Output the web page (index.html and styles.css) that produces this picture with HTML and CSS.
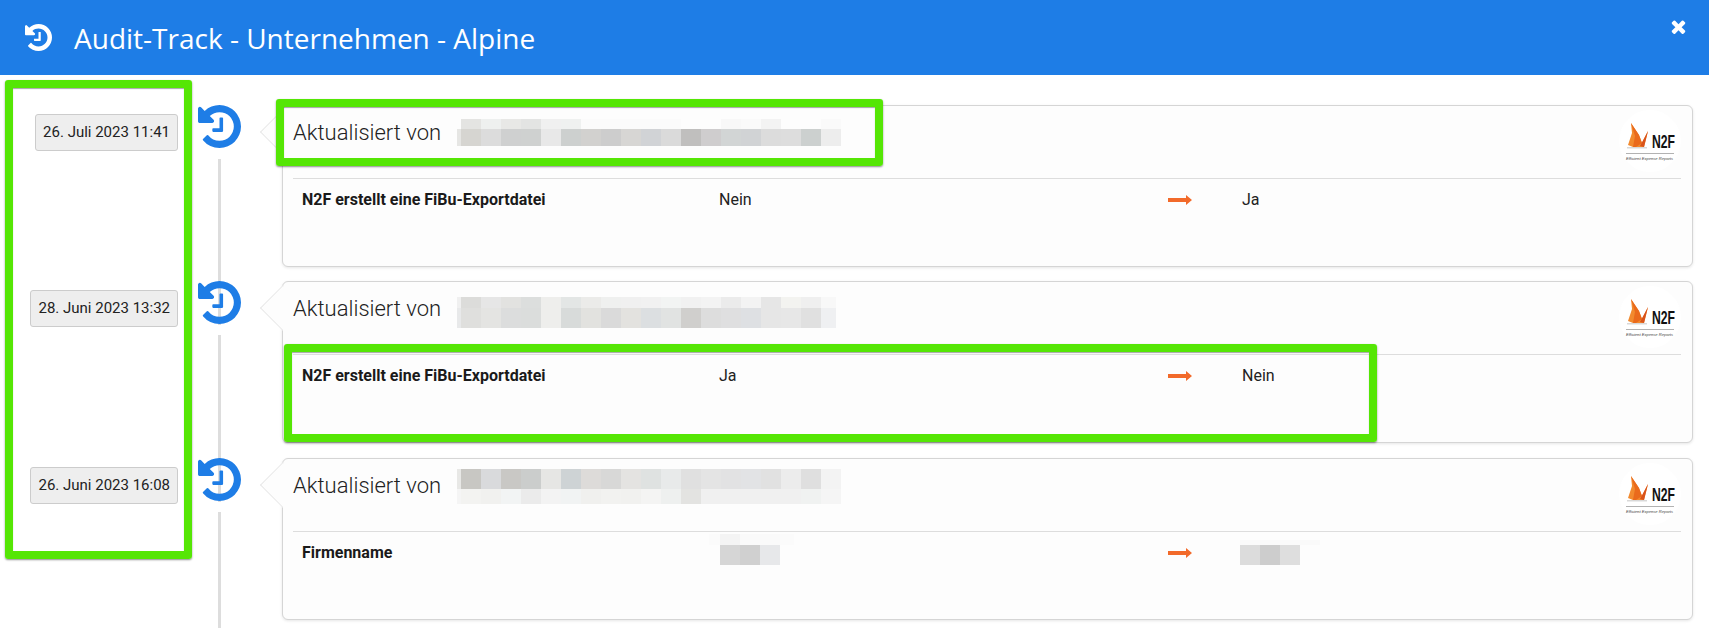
FILE: index.html
```html
<!DOCTYPE html>
<html lang="de">
<head>
<meta charset="utf-8">
<title>Audit-Track - Unternehmen - Alpine</title>
<link rel="stylesheet" href="styles.css">
</head>
<body>
<svg class="sprites" width="0" height="0" aria-hidden="true">
  <defs>
    <symbol id="history" viewBox="128 128 1536 1536"><path d="M1664 896q0 156-61 298t-164 245-245 164-298 61q-172 0-327-72.5t-264-204.5q-7-10-6.5-22.5t8.5-20.5l137-138q10-9 25-9 16 2 23 12 73 95 179 147t225 52q104 0 198.5-40.5t163.5-109.5 109.5-163.5 40.5-198.5-40.5-198.5-109.5-163.5-163.5-109.5-198.5-40.5q-98 0-188 35.5t-160 101.5l137 138q31 30 14 69-17 40-59 40h-448q-26 0-45-19t-19-45v-448q0-42 40-59 39-17 69 14l130 129q107-101 244.5-156.5t284.5-55.5q156 0 298 61t245 164 164 245 61 298zm-640-288v448q0 14-9 23t-23 9h-320q-14 0-23-9t-9-23v-64q0-14 9-23t23-9h224v-352q0-14 9-23t23-9h64q14 0 23 9t9 23z"/></symbol>
    <symbol id="arrow" viewBox="0 0 24 10"><path d="M0 3h18V0l6 5-6 5V7H0z"/></symbol>
    <symbol id="logo" viewBox="0 0 62 62">
      <circle cx="31" cy="31" r="31" fill="#fff"/>
      <path d="M8 37h20v1.500H8z" fill="#d8d8d8"/>
      <path d="M12 13 20 25 23 33 29 21 25 37 14 37 9 35 13 23z" fill="#f28a2e"/>
      <path d="M12 13 20 25 23 33 17 37 14 37 16 26z" fill="#ea6a1c"/>
      <path d="M29 21 25 37 21 36z" fill="#d9531a"/>
      <text x="33" y="38" class="logo-mark" textLength="23" lengthAdjust="spacingAndGlyphs">N2F</text>
      <path d="M7 43h48v.7H7z" fill="#999"/>
      <text x="7" y="50" class="logo-tag" textLength="47" lengthAdjust="spacingAndGlyphs">Efficient Expense Reports</text>
    </symbol>
  </defs>
</svg>

<header class="topbar">
  <svg class="topbar-icon"><use href="#history"/></svg>
  <h1 class="topbar-title">Audit-Track - Unternehmen - Alpine</h1>
  <svg class="topbar-close" viewBox="302 238 1188 1316"><path d="M1490 1322q0 40-28 68l-136 136q-28 28-68 28t-68-28l-294-294-294 294q-28 28-68 28t-68-28l-136-136q-28-28-28-68t28-68l294-294-294-294q-28-28-28-68t28-68l136-136q28-28 68-28t68 28l294 294 294-294q28-28 68-28t68 28l136 136q28 28 28 68t-28 68l-294 294 294 294q28 28 28 68z"/></svg>
</header>

<main class="timeline">
  <article class="entry">
    <div class="entry-date"><time class="date-badge">26. Juli 2023 11:41</time></div>
    <div class="entry-rail"><svg class="rail-icon"><use href="#history"/></svg><span class="rail-line"></span></div>
    <section class="card">
      <div class="card-head">
        <h2 class="card-title">Aktualisiert von</h2>
        <svg class="mosaic mosaic-a" width="384" height="27" viewBox="456 118 384 27" shape-rendering="crispEdges">
          <g>
            <rect x="460" y="118" width="20" height="10" fill="#e4e4e2"/><rect x="480" y="118" width="20" height="10" fill="#eef0ef"/><rect x="500" y="118" width="20" height="10" fill="#e8e8e6"/><rect x="520" y="118" width="20" height="10" fill="#e3e4e3"/><rect x="540" y="118" width="20" height="10" fill="#f0f0f0"/><rect x="560" y="118" width="20" height="10" fill="#eff1f0"/><rect x="580" y="118" width="100" height="10" fill="#fbfbfb"/><rect x="720" y="118" width="20" height="10" fill="#f8f8f8"/><rect x="740" y="118" width="20" height="10" fill="#fafafa"/><rect x="760" y="118" width="20" height="10" fill="#f3f3f3"/><rect x="820" y="118" width="20" height="10" fill="#fafafa"/>
            <rect x="456" y="128" width="4" height="17" fill="#e6e6e4"/><rect x="460" y="128" width="20" height="17" fill="#d6d5d1"/><rect x="480" y="128" width="20" height="17" fill="#dcdcdc"/><rect x="500" y="128" width="20" height="17" fill="#cfd0d0"/><rect x="520" y="128" width="20" height="17" fill="#cfd1d0"/><rect x="540" y="128" width="20" height="17" fill="#e8e8e8"/><rect x="560" y="128" width="20" height="17" fill="#cdd0cf"/><rect x="580" y="128" width="20" height="17" fill="#d2d1cf"/><rect x="600" y="128" width="20" height="17" fill="#cdcdcd"/><rect x="620" y="128" width="20" height="17" fill="#d7d6d4"/><rect x="640" y="128" width="20" height="17" fill="#d1d3d6"/><rect x="660" y="128" width="20" height="17" fill="#dadada"/><rect x="680" y="128" width="20" height="17" fill="#c0bfbe"/><rect x="700" y="128" width="20" height="17" fill="#cfcdce"/><rect x="720" y="128" width="20" height="17" fill="#d2d5d5"/><rect x="740" y="128" width="20" height="17" fill="#d1d3d5"/><rect x="760" y="128" width="20" height="17" fill="#dcdcdc"/><rect x="780" y="128" width="20" height="17" fill="#dddddd"/><rect x="800" y="128" width="20" height="17" fill="#ccd0cf"/><rect x="820" y="128" width="20" height="17" fill="#ededed"/>
          </g>
        </svg>
        <svg class="card-logo"><use href="#logo"/></svg>
      </div>
      <div class="change-row">
        <strong class="change-label">N2F erstellt eine FiBu-Exportdatei</strong>
        <span class="change-value">Nein</span>
        <svg class="change-arrow"><use href="#arrow"/></svg>
        <span class="change-value">Ja</span>
      </div>
    </section>
  </article>

  <article class="entry">
    <div class="entry-date"><time class="date-badge">28. Juni 2023 13:32</time></div>
    <div class="entry-rail"><svg class="rail-icon"><use href="#history"/></svg><span class="rail-line"></span></div>
    <section class="card">
      <div class="card-head">
        <h2 class="card-title">Aktualisiert von</h2>
        <svg class="mosaic mosaic-b" width="379" height="31" viewBox="456 297 379 31" shape-rendering="crispEdges">
          <g>
            <rect x="456" y="297" width="4" height="11" fill="#f0f0f0"/><rect x="460" y="297" width="20" height="11" fill="#dcdcda"/><rect x="480" y="297" width="20" height="11" fill="#e6e6e6"/><rect x="500" y="297" width="20" height="11" fill="#e2e2e0"/><rect x="520" y="297" width="20" height="11" fill="#dcdedd"/><rect x="540" y="297" width="20" height="11" fill="#eeeeec"/><rect x="560" y="297" width="20" height="11" fill="#e3e6e5"/><rect x="580" y="297" width="20" height="11" fill="#ebebe9"/><rect x="600" y="297" width="20" height="11" fill="#eff0ef"/><rect x="620" y="297" width="20" height="11" fill="#f0f0f0"/><rect x="640" y="297" width="20" height="11" fill="#f1f1f1"/><rect x="660" y="297" width="20" height="11" fill="#f2f4f3"/><rect x="680" y="297" width="20" height="11" fill="#f1f1f1"/><rect x="700" y="297" width="20" height="11" fill="#f3f3f3"/><rect x="720" y="297" width="20" height="11" fill="#ebebeb"/><rect x="740" y="297" width="20" height="11" fill="#f3f3f3"/><rect x="760" y="297" width="20" height="11" fill="#e6e6e6"/><rect x="780" y="297" width="20" height="11" fill="#f3f3f0"/><rect x="800" y="297" width="20" height="11" fill="#efefef"/><rect x="820" y="297" width="15" height="11" fill="#f8f8f8"/>
            <rect x="456" y="308" width="4" height="20" fill="#e8e9ea"/><rect x="460" y="308" width="20" height="20" fill="#dfdfdd"/><rect x="480" y="308" width="20" height="20" fill="#e4e4e2"/><rect x="500" y="308" width="20" height="20" fill="#dcdddd"/><rect x="520" y="308" width="20" height="20" fill="#dbdddc"/><rect x="540" y="308" width="20" height="20" fill="#eeeeec"/><rect x="560" y="308" width="20" height="20" fill="#d8dbda"/><rect x="580" y="308" width="20" height="20" fill="#e2e2df"/><rect x="600" y="308" width="20" height="20" fill="#dadada"/><rect x="620" y="308" width="20" height="20" fill="#e3e2df"/><rect x="640" y="308" width="20" height="20" fill="#dcdfe1"/><rect x="660" y="308" width="20" height="20" fill="#e1e3e2"/><rect x="680" y="308" width="20" height="20" fill="#d0cfcd"/><rect x="700" y="308" width="20" height="20" fill="#dddddd"/><rect x="720" y="308" width="20" height="20" fill="#dfdfe0"/><rect x="740" y="308" width="20" height="20" fill="#dee0e3"/><rect x="760" y="308" width="20" height="20" fill="#e6e6e6"/><rect x="780" y="308" width="20" height="20" fill="#e7e7e7"/><rect x="800" y="308" width="20" height="20" fill="#e0e0e0"/><rect x="820" y="308" width="15" height="20" fill="#eff0f2"/>
          </g>
        </svg>
        <svg class="card-logo"><use href="#logo"/></svg>
      </div>
      <div class="change-row">
        <strong class="change-label">N2F erstellt eine FiBu-Exportdatei</strong>
        <span class="change-value">Ja</span>
        <svg class="change-arrow"><use href="#arrow"/></svg>
        <span class="change-value">Nein</span>
      </div>
    </section>
  </article>

  <article class="entry">
    <div class="entry-date"><time class="date-badge">26. Juni 2023 16:08</time></div>
    <div class="entry-rail"><svg class="rail-icon"><use href="#history"/></svg><span class="rail-line"></span></div>
    <section class="card">
      <div class="card-head">
        <h2 class="card-title">Aktualisiert von</h2>
        <svg class="mosaic mosaic-c" width="384" height="35" viewBox="456 468 384 35" shape-rendering="crispEdges">
          <g>
            <rect x="456" y="468" width="4" height="20" fill="#e8e8e6"/><rect x="460" y="468" width="20" height="20" fill="#c8c7c3"/><rect x="480" y="468" width="20" height="20" fill="#d9dadc"/><rect x="500" y="468" width="20" height="20" fill="#c9c8c5"/><rect x="520" y="468" width="20" height="20" fill="#cbcdcc"/><rect x="540" y="468" width="20" height="20" fill="#e6e6e4"/><rect x="560" y="468" width="20" height="20" fill="#ced3d5"/><rect x="580" y="468" width="20" height="20" fill="#dddbd9"/><rect x="600" y="468" width="20" height="20" fill="#d8d8d7"/><rect x="620" y="468" width="20" height="20" fill="#e4e3e1"/><rect x="640" y="468" width="20" height="20" fill="#dfe2e1"/><rect x="660" y="468" width="20" height="20" fill="#e8eaea"/><rect x="680" y="468" width="20" height="20" fill="#e0e0e0"/><rect x="700" y="468" width="20" height="20" fill="#e4e4e4"/><rect x="720" y="468" width="20" height="20" fill="#e2e2e3"/><rect x="740" y="468" width="20" height="20" fill="#e2e3e5"/><rect x="760" y="468" width="20" height="20" fill="#e1e1e1"/><rect x="780" y="468" width="20" height="20" fill="#ececec"/><rect x="800" y="468" width="20" height="20" fill="#dfdfdf"/><rect x="820" y="468" width="20" height="20" fill="#f3f3f3"/>
            <rect x="456" y="488" width="4" height="15" fill="#f5f5f5"/><rect x="460" y="488" width="20" height="15" fill="#f3f3f1"/><rect x="480" y="488" width="20" height="15" fill="#f1f1ef"/><rect x="500" y="488" width="20" height="15" fill="#f2f4f4"/><rect x="520" y="488" width="20" height="15" fill="#ebebeb"/><rect x="540" y="488" width="20" height="15" fill="#f3f3f3"/><rect x="560" y="488" width="20" height="15" fill="#f1f3f3"/><rect x="580" y="488" width="20" height="15" fill="#f0f0ee"/><rect x="600" y="488" width="20" height="15" fill="#f2f2f0"/><rect x="620" y="488" width="20" height="15" fill="#f1f1ef"/><rect x="640" y="488" width="20" height="15" fill="#f4f4f3"/><rect x="660" y="488" width="20" height="15" fill="#eef0ef"/><rect x="680" y="488" width="20" height="15" fill="#e3e3e1"/><rect x="700" y="488" width="100" height="15" fill="#f0f0f0"/><rect x="800" y="488" width="20" height="15" fill="#f0f2f1"/><rect x="820" y="488" width="20" height="15" fill="#f5f5f5"/>
          </g>
        </svg>
        <svg class="card-logo"><use href="#logo"/></svg>
      </div>
      <div class="change-row">
        <strong class="change-label">Firmenname</strong>
        <span class="change-value">
          <svg class="mosaic mosaic-old" width="85" height="31" viewBox="709 537 85 31" shape-rendering="crispEdges">
            <rect x="709" y="537" width="11" height="11" fill="#fbfbfb"/><rect x="720" y="537" width="20" height="11" fill="#f4f4f4"/><rect x="740" y="537" width="40" height="11" fill="#fafafa"/><rect x="780" y="537" width="14" height="11" fill="#fbfbfb"/>
            <rect x="720" y="548" width="20" height="20" fill="#d6d6d6"/><rect x="740" y="548" width="20" height="20" fill="#d0d0d0"/><rect x="760" y="548" width="20" height="20" fill="#e7e8ea"/>
          </svg>
        </span>
        <svg class="change-arrow"><use href="#arrow"/></svg>
        <span class="change-value">
          <svg class="mosaic mosaic-new" width="80" height="25" viewBox="1240 543 80 25" shape-rendering="crispEdges">
            <rect x="1240" y="543" width="80" height="5" fill="#fafafa"/>
            <rect x="1240" y="548" width="20" height="20" fill="#dcdcdc"/><rect x="1260" y="548" width="20" height="20" fill="#cdcdcd"/><rect x="1280" y="548" width="20" height="20" fill="#dedede"/>
          </svg>
        </span>
      </div>
    </section>
  </article>
</main>

<div class="marker marker-dates"></div>
<div class="marker marker-author"></div>
<div class="marker marker-row"></div>
</body>
</html>
```

FILE: styles.css
```css
* { box-sizing: border-box; }
html, body { margin: 0; height: 100%; overflow: hidden; background: #fff; }
body { position: relative; font-family: Roboto, "Liberation Sans", sans-serif; color: #222; }
.sprites { position: absolute; }

.topbar { display: flex; align-items: center; height: 75px; padding-left: 25px; background: #1e7de6; color: #fff; }
.topbar-icon { width: 27px; height: 27px; margin-top: -1px; fill: #fff; }
.topbar-title { flex: 1; margin: 0 0 0 22px; font: 400 28px/1 "Open Sans", sans-serif; }
.topbar-close { width: 15px; height: 15px; margin: -23px 23px 0 0; fill: #fff; }

.timeline { padding-top: 29.5px; }
.entry { display: flex; height: 176.5px; }

.entry-date { display: flex; justify-content: flex-end; align-items: flex-start; width: 178px; padding-top: 9px; }
.date-badge { display: block; padding: 0 7px; height: 37px; line-height: 35px; font-size: 15px; white-space: nowrap; color: #222; background: #eee; border: 1px solid #ccc; border-radius: 3px; }

.entry-rail { display: flex; flex-direction: column; align-items: center; width: 104px; padding-left: 0; }
.rail-icon { flex: none; width: 43px; height: 43px; margin: 0 19px 0 0; fill: #1e7de6; position: relative; left: 0; }
.rail-line { flex: 1; width: 3px; margin: 11px 20px -44px 0; background: #ddd; }
.entry-rail { align-items: flex-start; padding-left: 20px; }
.rail-line { margin-left: 20px; }

.card { position: relative; width: 1411px; height: 162px; background: #fdfdfd; border: 1px solid #d5d5d5; border-radius: 6px; box-shadow: 0 1px 3px rgba(0, 0, 0, .1); }
.card::before { content: ""; position: absolute; left: -17px; top: 9px; width: 33px; height: 33px; background: #fdfdfd; border-left: 1px solid #e2e2e2; border-bottom: 1px solid #e2e2e2; transform: rotate(45deg) scale(.97); clip-path: polygon(0 0, 0 100%, 100% 100%); }

.card-head { position: relative; display: flex; align-items: flex-start; justify-content: space-between; height: 73px; margin: 0 11px 0 10px; border-bottom: 1px solid #ddd; }
.card-title { margin: 14px 0 0; font-size: 22px; font-weight: 300; line-height: 26px; color: #222; }
.card-logo { position: absolute; right: 0; top: 4px; width: 62px; height: 62px; }
.logo-mark { font: 700 19px "Liberation Sans", sans-serif; fill: #111; }
.logo-tag { font: italic 4px "Liberation Sans", sans-serif; fill: #444; }

.mosaic { position: absolute; display: block; }
.mosaic-a { left: 164px; top: 13px; }
.mosaic-b { left: 164px; top: 15px; }
.mosaic-c { left: 164px; top: 10px; }
.mosaic-old { left: -10px; top: -9px; }
.mosaic-new { left: -2px; top: -3px; }

.change-row { display: grid; grid-template-columns: 417px 449px 74px 1fr; align-items: center; padding: 11px 0 0 19px; font-size: 16px; line-height: 20px; }
.change-label { font-weight: 700; color: #1a1a1a; }
.change-value { position: relative; display: block; min-height: 20px; color: #222; }
.change-arrow { width: 24px; height: 10px; fill: #f26a2a; }

.marker { position: absolute; border: 8px solid #55e605; border-radius: 3px; box-shadow: 0 1px 2px rgba(0, 0, 0, .45), inset 0 1px 1px rgba(0, 0, 0, .35); }
.marker-dates { left: 5px; top: 80px; width: 187px; height: 479px; }
.marker-author { left: 276px; top: 99px; width: 607px; height: 67px; }
.marker-row { left: 284px; top: 344px; width: 1093px; height: 98px; }
```
